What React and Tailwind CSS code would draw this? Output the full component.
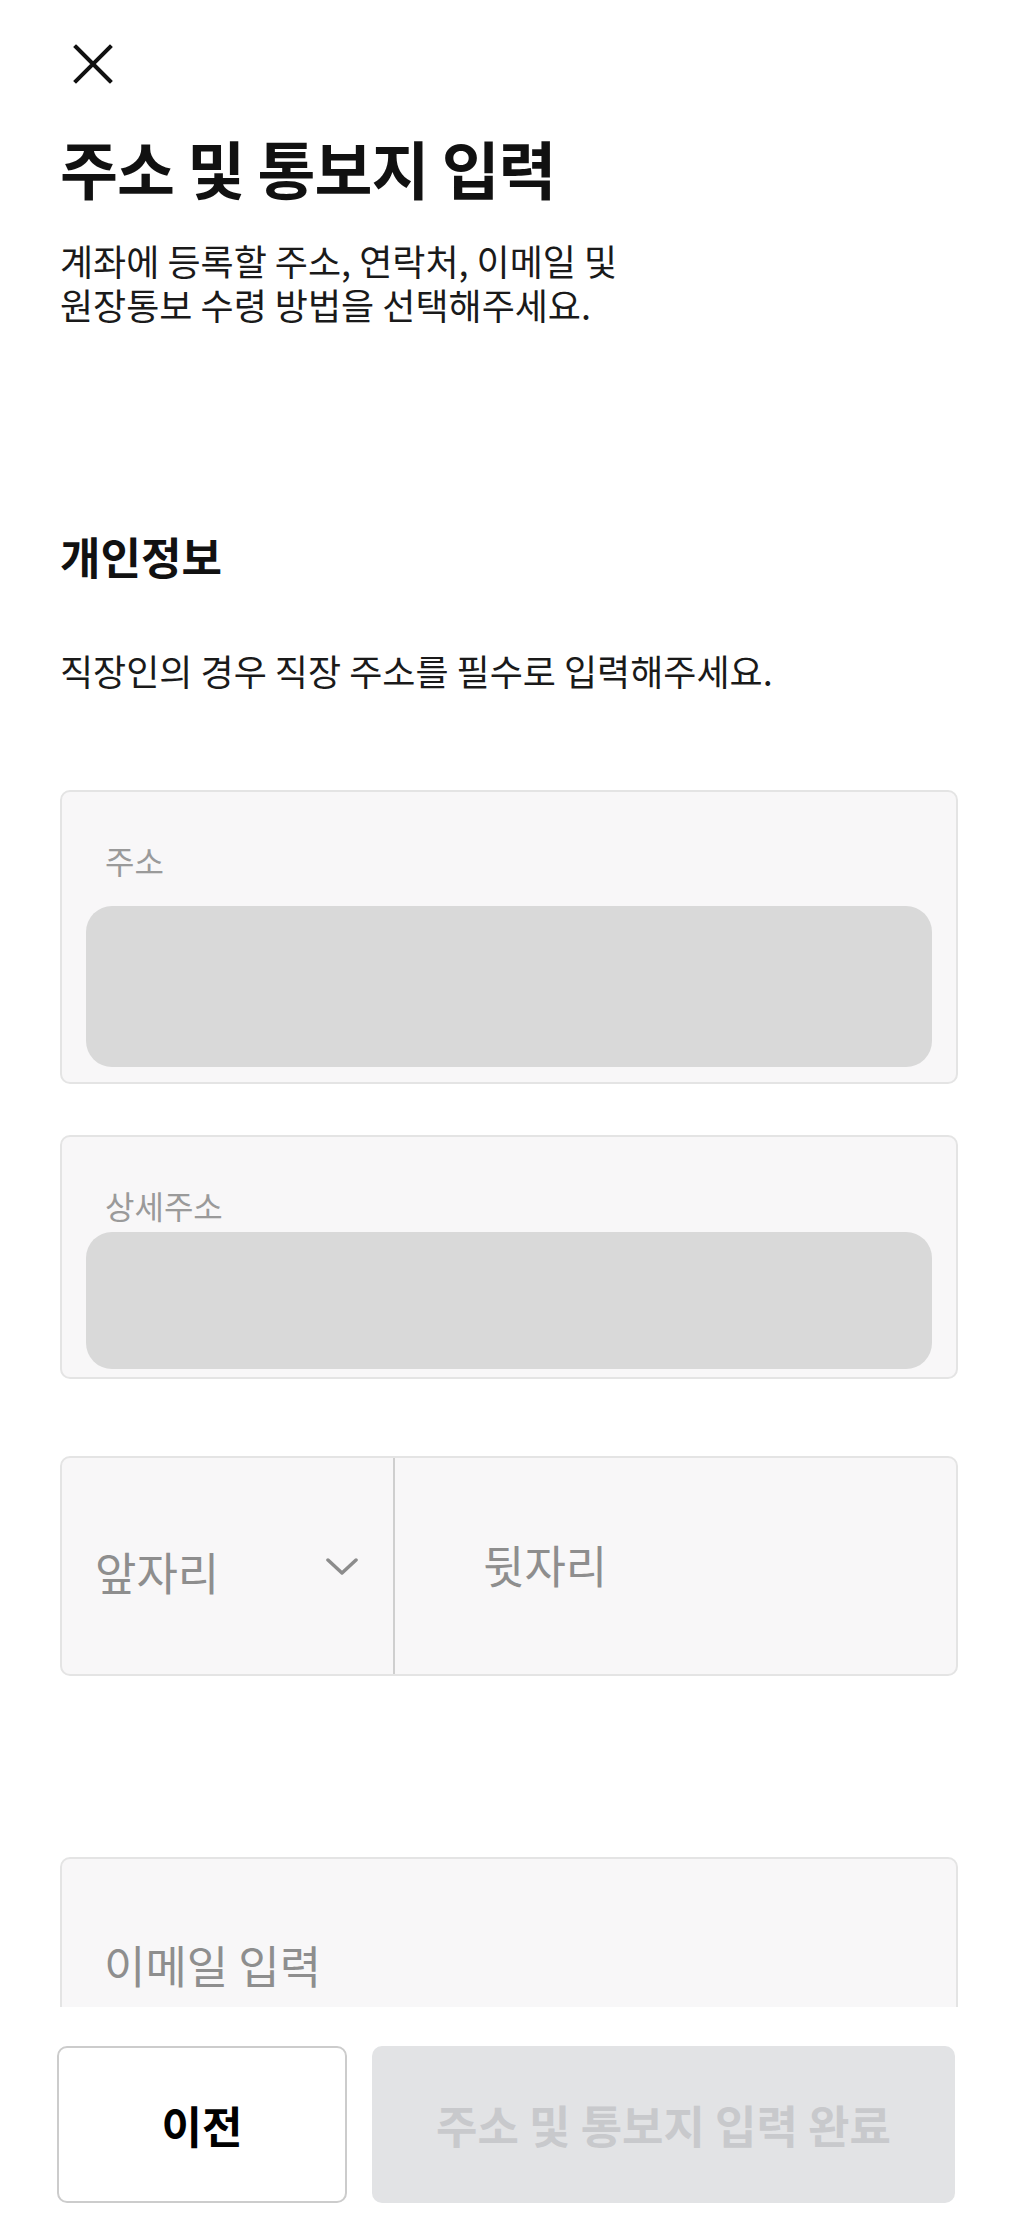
import React from "react";

const font = { fontFamily: '"Noto Sans CJK KR", "Noto Sans", sans-serif' };

function CloseIcon() {
  return (
    <svg width="40" height="40" viewBox="0 0 40 40" fill="none">
      <path d="M3 3L37 37M37 3L3 37" stroke="#111" strokeWidth="4" strokeLinecap="square" />
    </svg>
  );
}

function Chevron() {
  return (
    <svg width="32" height="20" viewBox="0 0 32 20" fill="none">
      <path d="M2 3L16 16L30 3" stroke="#8c8c8c" strokeWidth="3.5" strokeLinecap="round" strokeLinejoin="round" />
    </svg>
  );
}

export default function App() {
  return (
    <div className="h-[2227px] flex flex-col bg-white text-[#111]" style={font}>
      {/* Scroll area */}
      <div className="h-[2007px] overflow-hidden pl-[60px] pr-[55px]">
        <button className="block mt-[44px] ml-[13px]">
          <CloseIcon />
        </button>

        <h1 className="mt-[47px] text-[63px] leading-[72px] font-bold tracking-[-1px]">
          주소 및 통보지 입력
        </h1>
        <p className="mt-[35px] text-[36px] leading-[44px] text-[#1a1a1a]">
          <span className="block">계좌에 등록할 주소, 연락처, 이메일 및</span>
          <span className="block">원장통보 수령 방법을 선택해주세요.</span>
        </p>

        <h2 className="mt-[206px] text-[44px] leading-[48px] font-bold">개인정보</h2>
        <p className="mt-[69px] text-[36px] leading-[42px] text-[#1a1a1a]">
          직장인의 경우 직장 주소를 필수로 입력해주세요.
        </p>

        {/* 주소 */}
        <div className="mt-[99px] h-[294px] rounded-[10px] border-2 border-[#e4e4e4] bg-[#f8f7f8] px-[24px] flex flex-col">
          <span className="mt-[50px] pl-[19px] text-[32px] leading-[36px] text-[#9a9a9a]">주소</span>
          <div className="mt-[28px] h-[161px] rounded-[26px] bg-[#d9d9d9]" />
        </div>

        {/* 상세주소 */}
        <div className="mt-[51px] h-[244px] rounded-[10px] border-2 border-[#e4e4e4] bg-[#f8f7f8] px-[24px] flex flex-col">
          <span className="mt-[50px] pl-[19px] text-[32px] leading-[36px] text-[#9a9a9a]">상세주소</span>
          <div className="mt-[9px] h-[137px] rounded-[26px] bg-[#d9d9d9]" />
        </div>

        {/* 연락처 */}
        <div className="mt-[77px] h-[220px] rounded-[10px] border-2 border-[#e4e4e4] bg-[#f8f7f8] flex">
          <div className="w-[333px] flex items-center pl-[33px] pr-[35px] border-r-2 border-[#cfcfcf]">
            <span className="mt-[12px] text-[45px] leading-[48px] text-[#8e8e8e]">앞자리</span>
            <span className="ml-auto mt-[2px]">
              <Chevron />
            </span>
          </div>
          <div className="flex-1 flex items-center pl-[88px]">
            <span className="mt-[-2px] text-[45px] leading-[48px] text-[#8e8e8e]">뒷자리</span>
          </div>
        </div>

        {/* 이메일 */}
        <div className="mt-[181px] h-[220px] rounded-[10px] border-2 border-[#e4e4e4] bg-[#f8f7f8] pl-[42px] pt-[82px]">
          <span className="text-[45px] leading-[48px] text-[#8e8e8e]">이메일 입력</span>
        </div>
      </div>

      {/* Bottom bar */}
      <div className="flex-1 bg-white flex gap-[25px] pl-[57px] pr-[58px] pt-[39px]">
        <button className="w-[290px] h-[157px] rounded-[10px] border-2 border-[#cccccc] bg-white text-[44px] font-bold text-black">
          이전
        </button>
        <button className="flex-1 h-[157px] rounded-[10px] bg-[#e2e3e5] text-[45px] font-bold text-[#c8c9cc]">
          주소 및 통보지 입력 완료
        </button>
      </div>
    </div>
  );
}
